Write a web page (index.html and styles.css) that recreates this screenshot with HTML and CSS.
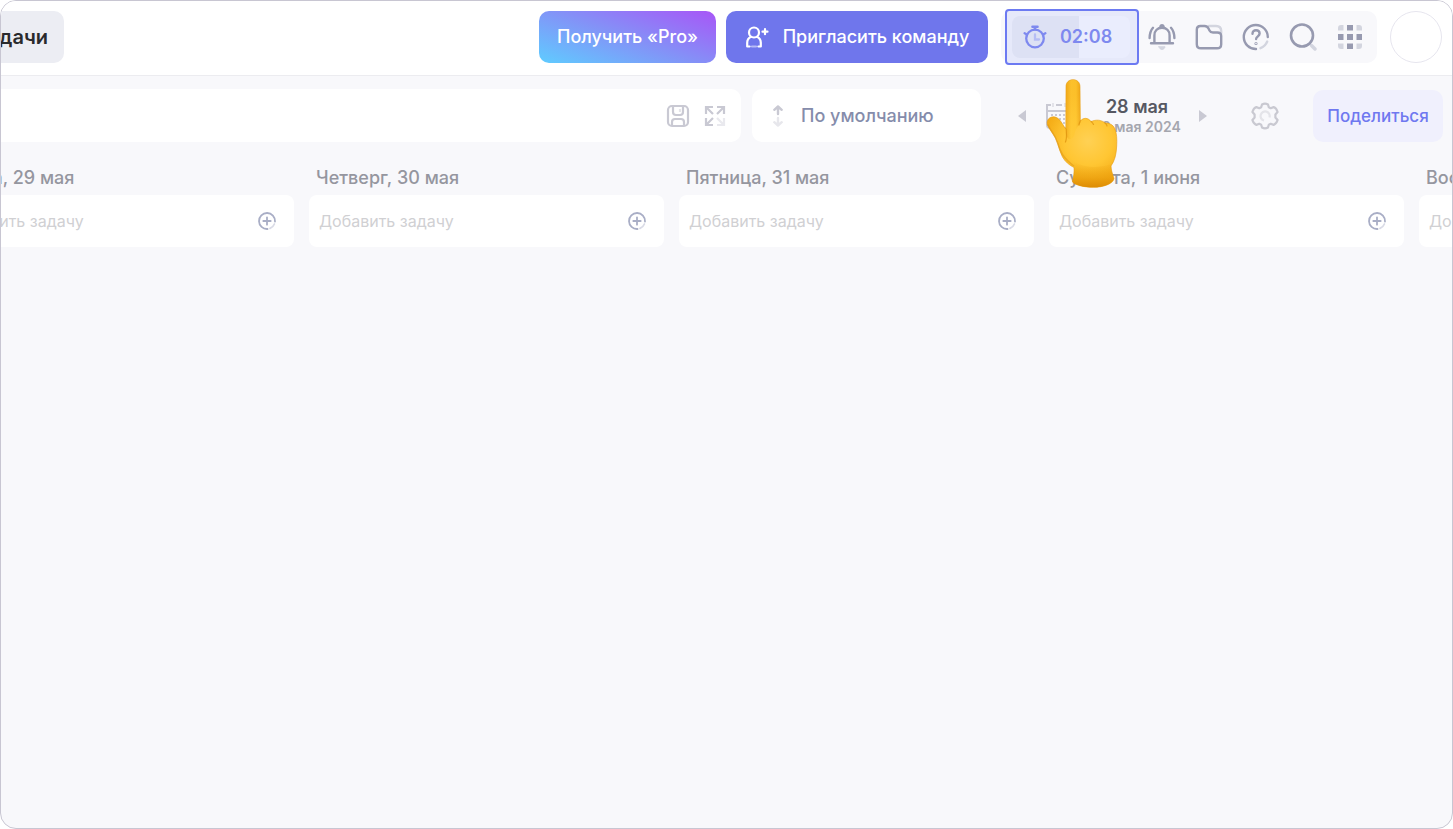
FILE: index.html
```html
<!DOCTYPE html>
<html lang="ru">
<head>
<meta charset="utf-8">
<title>Задачи</title>
<link rel="stylesheet" href="styles.css">
</head>
<body>
<svg class="sprite" aria-hidden="true">
  <symbol id="add" viewBox="0 0 20 20">
    <path d="M18 10.5A8 8 0 1 0 10.5 18M10 6.3v7.4M6.3 10h7.4" fill="none" stroke="#a9aec6" stroke-width="1.8" stroke-linecap="round"/>
    <path d="M17.4 13A8 8 0 0 1 13 17.4" fill="none" stroke="#d9dbe6" stroke-width="1.8" stroke-linecap="round"/>
  </symbol>
</svg>
<div class="app">
  <header class="header">
    <button class="tab" type="button"><span>Мои задачи</span></button>
    <div class="header-actions">
      <button class="btn btn-pro" type="button">Получить «Pro»</button>
      <button class="btn btn-invite" type="button">
        <svg width="24" height="24" viewBox="0 0 24 24" fill="none" stroke="#fff" stroke-width="2.2" stroke-linecap="round" stroke-linejoin="round">
          <circle cx="9" cy="7.5" r="5"/>
          <path d="M4.600 21.500H2.200v-3.700c0-3 1.600-5 3.900-6M13.400 21.500h2.400v-3.700c0-3-1.600-5-3.900-6M20 4.200v5M17.500 6.700h5"/>
          <path d="M7 21.500h4" opacity=".5"/>
        </svg>
        <span>Пригласить команду</span>
      </button>
    </div>
    <div class="tools">
      <div class="timer-wrap">
        <button class="timer" type="button">
          <svg width="24" height="24" viewBox="0 0 24 24" fill="none" stroke="#7e89ef" stroke-width="2.300" stroke-linecap="round">
            <circle cx="12" cy="13.500" r="8.800"/>
            <path d="M9.500 1.800h5M12 2v2.300" stroke-width="2.600"/>
            <path d="M1.600 8.200 4 9.500M22.400 8.200 20 9.500"/>
            <path d="M12 9.500v5h4" stroke="#b6bdf4"/>
          </svg>
          <span>02:08</span>
        </button>
      </div>
      <button class="tool" type="button" aria-label="Уведомления">
        <svg width="28" height="28" viewBox="0 0 28 28" fill="none" stroke="#979ab0" stroke-width="2.400" stroke-linecap="round" stroke-linejoin="round">
          <path d="M3 20.200h22M6.400 20V12.500c0-4.800 3.200-7.700 7.600-7.700s7.600 2.900 7.600 7.700v7.500"/>
          <path d="M12.400 3.300a1.700 1.700 0 0 1 3.200 0z" fill="#979ab0"/>
          <path d="M5 4.800C3 7 1.700 10 1.600 15M23 4.800c2 2.200 3.300 5.200 3.400 10.200"/>
          <path d="M11 23.800h6c-.3 1.600-1.500 2.600-3 2.600s-2.700-1-3-2.600z" fill="#d3d5df" stroke="#d3d5df" stroke-width="1"/>
        </svg>
      </button>
      <button class="tool" type="button" aria-label="Файлы">
        <svg width="28" height="28" viewBox="0 0 28 28" fill="none" stroke="#979ab0" stroke-width="2.400" stroke-linecap="round" stroke-linejoin="round">
          <path d="M14 3h7c3.300 0 5.200 2 5.200 5v2" stroke="#d3d5df"/>
          <path d="M1.800 6.800c0-2.500 1.400-3.800 3.700-3.800h4c2 0 3.200.9 4 2.500l1 2c.7 1.500 1.700 2 3.500 2h4.300c2.500 0 3.900 1.200 3.900 3.500v8.200c0 2.800-1.500 4.100-4.200 4.100H6c-2.700 0-4.200-1.300-4.200-4.100z"/>
        </svg>
      </button>
      <button class="tool" type="button" aria-label="Помощь">
        <svg width="28" height="28" viewBox="0 0 28 28" fill="none" stroke="#979ab0" stroke-width="2.400" stroke-linecap="round">
          <path d="M25.800 14A12 12 0 1 0 14 26"/>
          <path d="M25.200 18.500A12 12 0 0 1 18.500 25.200" stroke="#d3d5df"/>
          <path d="M10.500 10.800c0-2.300 1.500-3.600 3.500-3.600s3.600 1.300 3.600 3.300c0 2.700-3.500 2.900-3.500 5.600"/>
          <circle cx="14" cy="20.500" r=".4"/>
        </svg>
      </button>
      <button class="tool" type="button" aria-label="Поиск">
        <svg width="28" height="28" viewBox="0 0 28 28" fill="none" stroke="#979ab0" stroke-width="2.600" stroke-linecap="round">
          <path d="M22.500 22.500 26 26" stroke="#d3d5df" stroke-width="3.400"/>
          <circle cx="13" cy="12.500" r="11"/>
        </svg>
      </button>
      <button class="tool" type="button" aria-label="Приложения">
        <svg width="24" height="24" viewBox="0 0 24 24" fill="#979ab0">
          <path d="M9 0h6v5.500H9zM0 9h5.500v6H0zM9 9h6v6H9zM18.500 9H24v6h-5.500zM9 18.500h6V24H9z"/>
          <path d="M5.500 0v5.500H0V3q0-3 3-3zM18.500 0H21q3 0 3 3v2.500h-5.500zM0 18.500h5.500V24H3q-3 0-3-3zM18.500 18.500H24V21q0 3-3 3h-2.500z" fill="#d3d5df"/>
        </svg>
      </button>
    </div>
    <button class="avatar" type="button" aria-label="Профиль"></button>
  </header>

  <div class="filters">
    <div class="search">
      <input class="search-input" type="text" aria-label="Поиск по задачам">
      <button class="plain" type="button" aria-label="Сохранить">
        <svg width="24" height="24" viewBox="0 0 24 24" fill="none" stroke="#c9c9d3" stroke-width="2.200" stroke-linejoin="round">
          <rect x="2" y="2" width="20" height="20" rx="4"/>
          <path d="M7 2v6q0 3 3 3h4q3 0 3-3V2M6 22v-4q0-3 3-3h6q3 0 3 3v4"/>
          <path d="M14 5v3" stroke="#e5e5ea"/>
        </svg>
      </button>
      <button class="plain" type="button" aria-label="На весь экран">
        <svg width="22" height="22" viewBox="0 0 22 22" fill="none" stroke="#c9c9d3" stroke-width="2.200">
          <path d="M2 9V2h7M2 2l7 7M13 2h7v7M20 2l-7 7M2 13v7h7M2 20l7-7"/>
          <path d="M13 20h7v-7M20 20l-7-7" stroke="#e9e9ee"/>
        </svg>
      </button>
    </div>
    <label class="sort">
      <svg width="12" height="22" viewBox="0 0 12 22" fill="none" stroke="#c9c9d3" stroke-width="2.400" stroke-linecap="round" stroke-linejoin="round">
        <path d="M6 9V1.500M2.300 4.800 6 1.500l3.700 3.300"/>
        <path d="M6 13v7.500M2.300 17.200 6 20.500l3.700-3.300" stroke="#e7e7ec"/>
      </svg>
      <select class="sort-select" aria-label="Сортировка"><option>По умолчанию</option></select>
    </label>
    <div class="period">
      <button class="plain arrow" type="button" aria-label="Назад">
        <svg width="8" height="14" viewBox="0 0 8 14" fill="#c9c9d3"><path d="M8 1v12L0 7z"/></svg>
      </button>
      <button class="plain" type="button" aria-label="Календарь">
        <svg width="28" height="28" viewBox="0 0 28 28" fill="none" stroke="#c9c9d3" stroke-width="2">
          <path d="M6 3H2v20q0 3 3 3h18q3 0 3-3V3h-4M2 9h24M11 3h6"/>
          <path d="M8 1v4M20 1v4" stroke="#e3e3e9"/>
          <path d="M6 13h17M6 17h17M6 21h17" stroke-dasharray="2 2"/>
        </svg>
      </button>
      <div class="dates">
        <strong class="date-main">28 мая</strong>
        <span class="date-sub">28 мая 2024</span>
      </div>
      <button class="plain arrow" type="button" aria-label="Вперёд">
        <svg width="8" height="14" viewBox="0 0 8 14" fill="#c9c9d3"><path d="M0 1v12l8-6z"/></svg>
      </button>
    </div>
    <button class="plain settings" type="button" aria-label="Настройки">
      <svg width="28" height="28" viewBox="0 0 28 28" fill="none" stroke="#c9c9d1" stroke-width="2.200" stroke-linejoin="round">
        <path d="M11 2.500Q14 .8 17 2.500L17.800 5.300 19.700 6.200 22.600 5.100Q25.500 6.300 26.600 10L24.400 12.500V15.500L26.600 18Q25.500 21.700 22.600 22.900L19.700 21.800 17.800 22.700 17 25.500Q14 27.200 11 25.500L10.200 22.700 8.300 21.800 5.400 22.900Q2.500 21.700 1.400 18L3.600 15.500V12.500L1.400 10Q2.500 6.300 5.400 5.100L8.300 6.200 10.200 5.300z"/>
        <path d="M13 18.500A4.600 4.600 0 1 1 18.500 15.500" stroke="#e4e4e9"/>
      </svg>
    </button>
    <button class="btn btn-share" type="button">Поделиться</button>
  </div>

  <main class="board">
    <section class="column">
      <h2 class="column-title">Среда, 29 мая</h2>
      <div class="add-card"><input class="add-input" type="text" placeholder="Добавить задачу" aria-label="Добавить задачу, 29 мая"><button class="plain" type="button" aria-label="Добавить"><svg width="20" height="20"><use href="#add"/></svg></button></div>
    </section>
    <section class="column">
      <h2 class="column-title">Четверг, 30 мая</h2>
      <div class="add-card"><input class="add-input" type="text" placeholder="Добавить задачу" aria-label="Добавить задачу, 30 мая"><button class="plain" type="button" aria-label="Добавить"><svg width="20" height="20"><use href="#add"/></svg></button></div>
    </section>
    <section class="column">
      <h2 class="column-title">Пятница, 31 мая</h2>
      <div class="add-card"><input class="add-input" type="text" placeholder="Добавить задачу" aria-label="Добавить задачу, 31 мая"><button class="plain" type="button" aria-label="Добавить"><svg width="20" height="20"><use href="#add"/></svg></button></div>
    </section>
    <section class="column">
      <h2 class="column-title">Суббота, 1 июня</h2>
      <div class="add-card"><input class="add-input" type="text" placeholder="Добавить задачу" aria-label="Добавить задачу, 1 июня"><button class="plain" type="button" aria-label="Добавить"><svg width="20" height="20"><use href="#add"/></svg></button></div>
    </section>
    <section class="column">
      <h2 class="column-title">Воскресенье, 2 июня</h2>
      <div class="add-card"><input class="add-input" type="text" placeholder="Добавить задачу" aria-label="Добавить задачу, 2 июня"><button class="plain" type="button" aria-label="Добавить"><svg width="20" height="20"><use href="#add"/></svg></button></div>
    </section>
  </main>

  <svg class="pointer" width="72" height="110" viewBox="0 0 72 110" aria-hidden="true">
    <defs>
      <radialGradient id="palm" gradientUnits="userSpaceOnUse" cx="42" cy="62" r="48">
        <stop offset="0" stop-color="#ffd154"/><stop offset=".5" stop-color="#ffc633"/><stop offset="1" stop-color="#f2a60f"/>
      </radialGradient>
      <linearGradient id="finger" x1="0" x2="1" y1="0" y2="0">
        <stop offset="0" stop-color="#f0a91c"/><stop offset=".35" stop-color="#ffc935"/><stop offset=".7" stop-color="#ffc832"/><stop offset="1" stop-color="#eda61a"/>
      </linearGradient>
      <linearGradient id="wrist" x1="0" x2="0" y1="0" y2="1">
        <stop offset="0" stop-color="#e99b08" stop-opacity="0"/><stop offset=".6" stop-color="#e79808" stop-opacity=".5"/><stop offset="1" stop-color="#dd8d06"/>
      </linearGradient>
    </defs>
    <path fill="url(#palm)" stroke="#e59c12" stroke-width=".6" d="M20 8C20 3 23 .7 27 .7s7 2.300 7 7.300l.3 34C37 38.500 42 38.300 45 42.500 50 40.500 55 40.500 59 44c5 0 8 2 9.500 5 2.500 5 2.500 12 2.200 18-.3 8-2 15-5.700 20 0 4 1.500 8 3 12.500C67 105 57 108.300 47.500 108.300S28 106 26.500 102.500C27.500 98 28.500 93 28 88.500 23 86 19 82.500 16.500 78 13 71 12.500 65 9.500 59 6.500 53.500 3 50 1.300 45.500.3 40.500 4 37.500 8 37.800c6 .7 8.500 8 11.800 12.200z"/>
    <path fill="url(#finger)" d="M20.200 8c0-5 3-7 6.800-7s6.800 2.500 6.800 7l.5 36c-3 4-5 6-6 12-2 5-6 6-8.300 0z" opacity=".75"/>
    <path fill="url(#wrist)" d="M28 83q18 9 37.500 2-.5 6 2.500 14.500c-1 5.500-11 8.800-20.500 8.800S28 106 26.500 102.500q2-7 1.500-19.500z"/>
    <path d="M20.200 50c0 5 1.200 9-.8 13M45 42.500q2 1.500 2.500 3M59 44q2 1.500 2 3M34.300 42q-1 2-1.300 4" fill="none" stroke="#dd920e" stroke-width="1.200" stroke-linecap="round" opacity=".75"/>
    <path d="M1.800 45.500C4 51 9 55 12 65c2 7 5 14 16 22" fill="none" stroke="#e19a18" stroke-width="1.500" opacity=".6"/>
  </svg>
</div>
</body>
</html>
```
FILE: styles.css
```css
* {
  box-sizing: border-box;
}

body {
  margin: 0;
  background: #fff;
  font-family: Inter, "Noto Sans", sans-serif;
  font-size: 18px;
  line-height: 24px;
  color: #95969f;
}

button,
input,
select {
  margin: 0;
  padding: 0;
  border: 0;
  background: none;
  color: inherit;
  font: inherit;
}

svg {
  display: block;
  flex: none;
}

.sprite {
  position: absolute;
  width: 0;
  height: 0;
}

.app {
  position: relative;
  display: flex;
  flex-direction: column;
  min-height: 100vh;
  overflow: hidden;
  border: 1px solid #c8c6d2;
  border-radius: 16px;
  background: #f8f8fb;
}

.header {
  display: flex;
  align-items: center;
  gap: 13px;
  padding: 10px 10px 12px 0;
  border-bottom: 1px solid #ececf0;
  background: #fff;
}

.tab {
  display: flex;
  justify-content: flex-end;
  align-items: center;
  width: 63px;
  height: 52px;
  padding-right: 16px;
  margin-right: auto;
  border-radius: 0 10px 10px 0;
  background: #ecedf3;
  color: #2a2a2c;
  font-size: 20px;
  font-weight: 600;
  white-space: nowrap;
}

.header-actions {
  display: flex;
  gap: 10px;
}

.btn {
  display: flex;
  align-items: center;
  justify-content: center;
  height: 52px;
  border-radius: 10px;
  font-weight: 500;
  white-space: nowrap;
}

.btn-pro {
  width: 177px;
  background: linear-gradient(20deg, #5fccff 0%, #8491f7 50%, #a855f7 100%);
  color: #fff;
}

.btn-invite {
  gap: 14px;
  width: 262px;
  background: #6f76ec;
  color: #fff;
}

.tools {
  display: flex;
  align-items: center;
  height: 52px;
  padding: 0 4px 0 11px;
  border-radius: 10px;
  background: #f8f8fb;
}

.timer-wrap {
  position: relative;
  z-index: 0;
  margin-right: 8px;
}

.timer-wrap::before {
  content: "";
  position: absolute;
  z-index: -1;
  inset: -7px -9px -7px -7px;
  border: 2px solid #6c7af2;
  border-radius: 4px;
  background: #e6e9fa;
}

.timer {
  display: flex;
  align-items: center;
  gap: 13px;
  width: 118px;
  height: 42px;
  padding-left: 11px;
  border-radius: 8px;
  background: linear-gradient(90deg, #dde1f4 57%, #eaedfd 57%);
  color: #7e89ef;
  font-weight: 600;
}

.tool {
  display: flex;
  align-items: center;
  justify-content: center;
  width: 47px;
  height: 52px;
}

.avatar {
  width: 52px;
  height: 52px;
  border: 1px solid #e6e5ee;
  border-radius: 50%;
}

.filters {
  display: flex;
  align-items: center;
  padding: 13px 9px 0 0;
}

.search {
  display: flex;
  flex: 1;
  align-items: center;
  gap: 14px;
  height: 53px;
  padding-right: 15px;
  border-radius: 0 10px 10px 0;
  background: #fff;
}

.search-input {
  flex: 1;
  min-width: 0;
  height: 100%;
}

.plain {
  display: flex;
  align-items: center;
  justify-content: center;
}

.sort {
  display: flex;
  align-items: center;
  gap: 17px;
  width: 229px;
  height: 53px;
  padding: 0 20px;
  margin-left: 11px;
  border-radius: 10px;
  background: #fff;
  color: #858cab;
  font-weight: 500;
}

.sort-select {
  flex: 1;
  min-width: 0;
  appearance: none;
}

.period {
  display: flex;
  align-items: center;
  margin-left: 33px;
}

.arrow {
  width: 16px;
  height: 24px;
}

.arrow + .plain {
  margin-left: 15px;
}

.dates {
  display: flex;
  flex-direction: column;
  align-items: center;
  width: 92px;
  margin: 0 12px 0 18px;
  padding-top: 2px;
  white-space: nowrap;
}

.date-main {
  color: #565862;
  line-height: 20px;
  font-weight: 600;
}

.date-sub {
  color: #a5a6ae;
  font-size: 14px;
  font-weight: 600;
  line-height: 20px;
}

.settings {
  margin: 0 34px 0 40px;
}

.btn-share {
  width: 130px;
  background: #f0f0fd;
  color: #6f78f0;
  font-size: 17px;
}

.board {
  display: flex;
  flex: 1;
  gap: 15px;
  margin-left: -62px;
  padding-top: 24px;
}

.column {
  flex: none;
  width: 355px;
}

.column-title {
  margin: 0 0 5px;
  padding-left: 7px;
  font-size: 18px;
  font-weight: 500;
  line-height: 24px;
}

.add-card {
  display: flex;
  align-items: center;
  height: 52px;
  padding: 0 17px 0 10px;
  border-radius: 8px;
  background: #fff;
}

.add-input {
  flex: 1;
  min-width: 0;
  height: 100%;
  font-size: 16px;
}

.add-input::placeholder {
  color: #d0d0d3;
  opacity: 1;
}

.pointer {
  position: absolute;
  top: 78px;
  right: 334px;
}
```
